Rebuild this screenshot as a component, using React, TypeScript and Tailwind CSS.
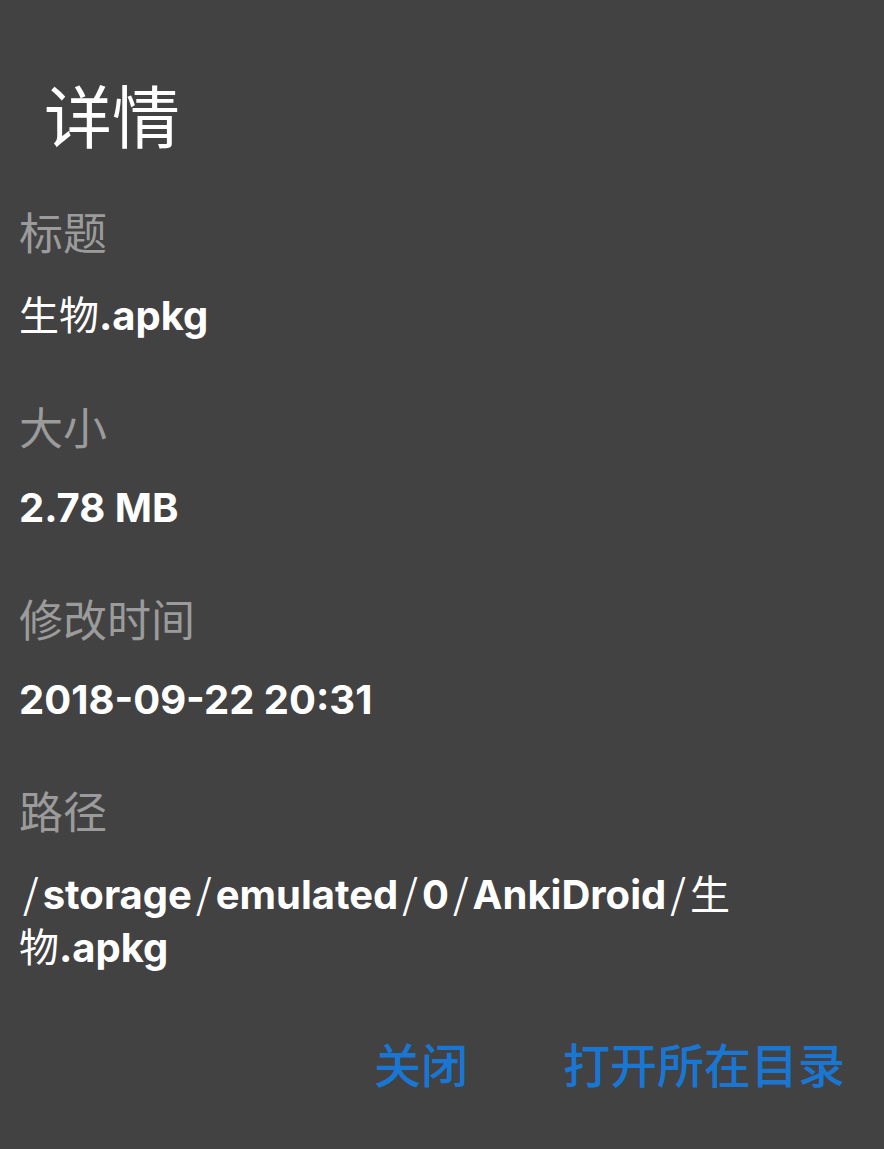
import React from "react";

const latin = "font-['Inter','Noto_Sans_CJK_SC',sans-serif]";

interface RowProps {
  label: string;
  children: React.ReactNode;
}

function DetailRow(props: RowProps) {
  return (
    <div className="flex flex-col mt-[50px] first:mt-0">
      <div className="text-[44px] leading-[60px] text-[#9b9b9b]">{props.label}</div>
      <div className={`mt-[22px] text-[40px] leading-[60px] text-white ${latin}`}>
        {props.children}
      </div>
    </div>
  );
}

function Cjk({ children }: { children: React.ReactNode }) {
  return <span className="font-normal font-['Noto_Sans_CJK_SC',sans-serif]">{children}</span>;
}

function Slash() {
  return <span className="px-[4px] font-normal font-['Noto_Sans_CJK_SC',sans-serif]">/</span>;
}

function B({ children }: { children: React.ReactNode }) {
  return <span className="font-bold">{children}</span>;
}

// path segments, slashes fall back to the CJK face like on the device
const segments = ["storage", "emulated", "0", "AnkiDroid"];

export default function App() {
  return (
    <div className="w-[884px] h-[1149px] bg-[#424242] font-['Noto_Sans_CJK_SC',sans-serif] overflow-hidden">
      <div className="pt-[73px] pl-[44px]">
        <h1 className="text-[68px] leading-[82px] text-white font-normal">详情</h1>
      </div>

      <div className="pl-[19px] mt-[46px] flex flex-col">
        <DetailRow label="标题">
          <Cjk>生物</Cjk>
          <B>.apkg</B>
        </DetailRow>
        <DetailRow label="大小">
          <B>2.78 MB</B>
        </DetailRow>
        <DetailRow label="修改时间">
          <B>2018-09-22 20:31</B>
        </DetailRow>
        <div className="flex flex-col mt-[50px]">
          <div className="text-[44px] leading-[60px] text-[#9b9b9b]">路径</div>
          <div className={`mt-[27px] text-[40px] leading-[50px] text-white ${latin}`}>
            {segments.map((s) => (
              <React.Fragment key={s}>
                <Slash />
                <B>{s}</B>
              </React.Fragment>
            ))}
            <Slash />
            <Cjk>生</Cjk>
            <br />
            <Cjk>物</Cjk>
            <B>.apkg</B>
          </div>
        </div>
      </div>

      <div className="mt-[60px] pr-[39px] flex justify-end items-center gap-[95px]">
        <button className="text-[47px] leading-[60px] font-medium text-[#1976d2]">关闭</button>
        <button className="text-[47px] leading-[60px] font-medium text-[#1976d2]">打开所在目录</button>
      </div>
    </div>
  );
}
